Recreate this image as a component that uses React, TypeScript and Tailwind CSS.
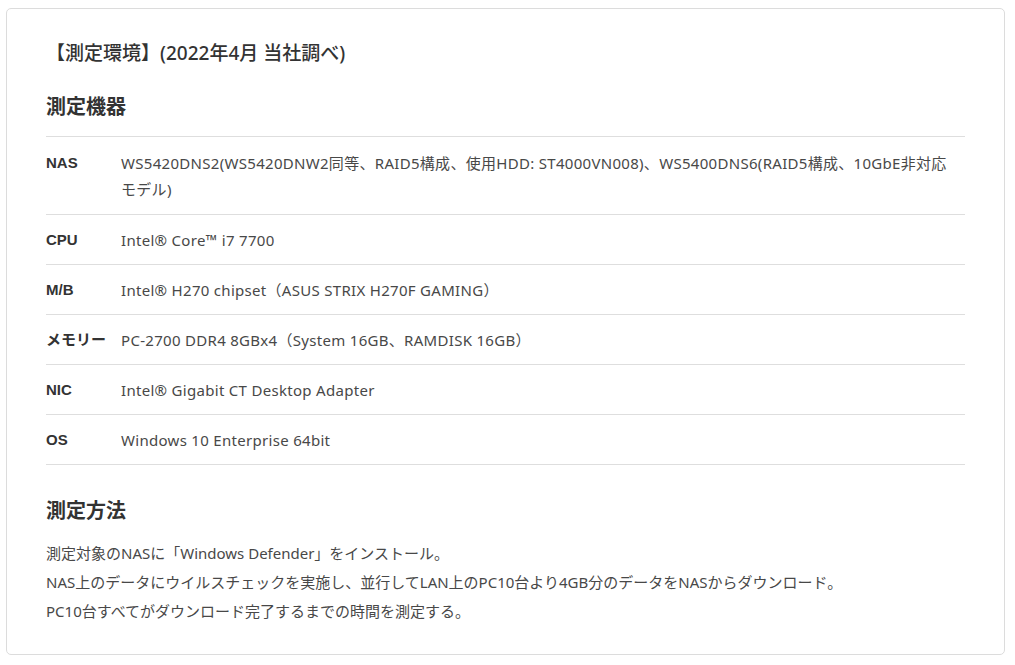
const rows: { label: string; value: string }[] = [
  {
    label: 'NAS',
    value:
      'WS5420DNS2(WS5420DNW2同等、RAID5構成、使用HDD: ST4000VN008)、WS5400DNS6(RAID5構成、10GbE非対応モデル)',
  },
  { label: 'CPU', value: 'Intel® Core™ i7 7700' },
  { label: 'M/B', value: 'Intel® H270 chipset（ASUS STRIX H270F GAMING）' },
  { label: 'メモリー', value: 'PC-2700 DDR4 8GBx4（System 16GB、RAMDISK 16GB）' },
  { label: 'NIC', value: 'Intel® Gigabit CT Desktop Adapter' },
  { label: 'OS', value: 'Windows 10 Enterprise 64bit' },
];

const App: React.FC = () => {
  return (
    <div className="min-h-screen bg-white pt-[8px] pl-[6px] pr-[10px] font-['Noto_Sans','Noto_Sans_CJK_JP',sans-serif]">
      <div className="rounded-[5px] border border-[#dcdcdc] px-[39px] pt-[31px] pb-[28px] text-[#333]">
        {/* title */}
        <h2 className="text-[19px] leading-[27px] font-medium">【測定環境】(2022年4月 当社調べ)</h2>

        <h3 className="mt-[26px] text-[20px] leading-[27px] font-bold">測定機器</h3>

        <div className="mt-[16px] border-t border-[#dedede]">
          {rows.map((row, i) => (
            <div
              key={row.label}
              className={
                i === 0
                  ? 'flex border-b border-[#dedede] py-[12.5px] text-[15px] leading-[26px]'
                  : 'flex border-b border-[#dedede] py-[11.5px] text-[15px] leading-[26px]'
              }
            >
              <div className="w-[75px] shrink-0 font-bold font-['Liberation_Sans','Noto_Sans_CJK_JP',sans-serif] text-[#333]">
                {row.label}
              </div>
              <div className="flex-1 pr-[10px] tracking-[0.02em] text-[#484848]">{row.value}</div>
            </div>
          ))}
        </div>

        <h3 className="mt-[32px] text-[20px] leading-[27px] font-bold">測定方法</h3>

        <div className="mt-[15px] text-[15px] leading-[29px] text-[#484848]">
          <p>測定対象のNASに「Windows Defender」をインストール。</p>
          <p>NAS上のデータにウイルスチェックを実施し、並行してLAN上のPC10台より4GB分のデータをNASからダウンロード。</p>
          <p>PC10台すべてがダウンロード完了するまでの時間を測定する。</p>
        </div>
      </div>
    </div>
  );
};

export default App;
